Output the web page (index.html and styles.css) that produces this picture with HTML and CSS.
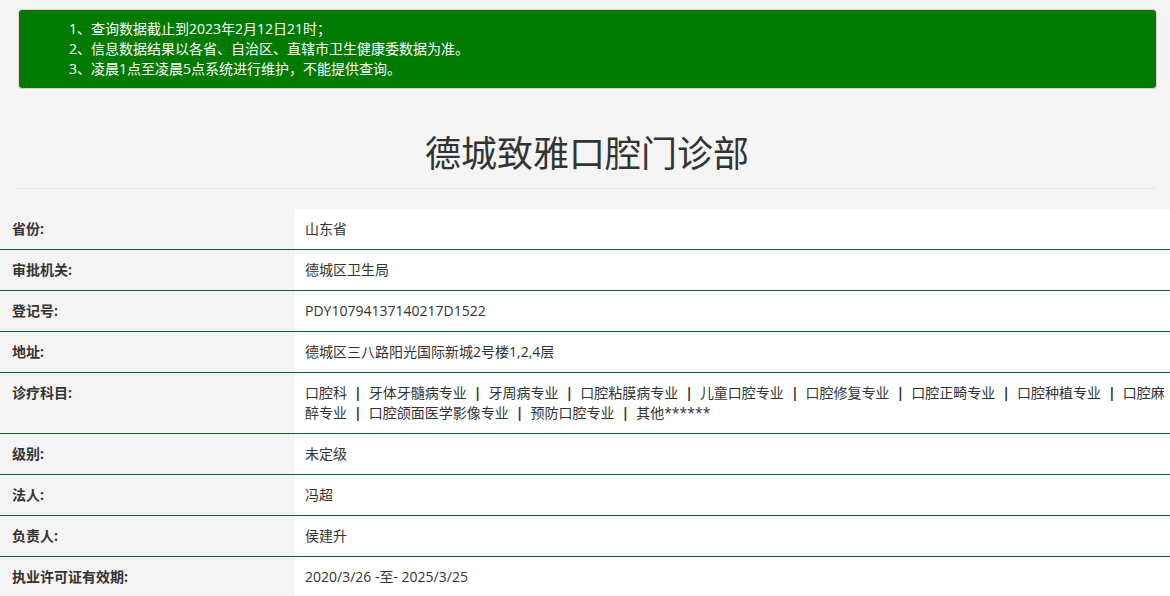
FILE: index.html
```html
<!DOCTYPE html>
<html lang="zh-CN">
<head>
<meta charset="utf-8">
<title>德城致雅口腔门诊部</title>
<link rel="stylesheet" href="styles.css">
</head>
<body>
<div class="notice">
  <ul class="notice-list">
    <li>1、查询数据截止到2023年2月12日21时；</li>
    <li>2、信息数据结果以各省、自治区、直辖市卫生健康委数据为准。</li>
    <li>3、凌晨1点至凌晨5点系统进行维护，不能提供查询。</li>
  </ul>
</div>
<div class="header">
  <h1 class="title">德城致雅口腔门诊部</h1>
</div>
<table class="info">
  <tr><th>省份:</th><td>山东省</td></tr>
  <tr><th>审批机关:</th><td>德城区卫生局</td></tr>
  <tr><th>登记号:</th><td>PDY10794137140217D1522</td></tr>
  <tr><th>地址:</th><td>德城区三八路阳光国际新城2号楼1,2,4层</td></tr>
  <tr><th>诊疗科目:</th><td>口腔科<span class="sep">|</span>牙体牙髓病专业<span class="sep">|</span>牙周病专业<span class="sep">|</span>口腔粘膜病专业<span class="sep">|</span>儿童口腔专业<span class="sep">|</span>口腔修复专业<span class="sep">|</span>口腔正畸专业<span class="sep">|</span>口腔种植专业<span class="sep">|</span>口腔麻醉专业<span class="sep">|</span>口腔颌面医学影像专业<span class="sep">|</span>预防口腔专业<span class="sep">|</span>其他******</td></tr>
  <tr><th>级别:</th><td>未定级</td></tr>
  <tr><th>法人:</th><td>冯超</td></tr>
  <tr><th>负责人:</th><td>侯建升</td></tr>
  <tr><th>执业许可证有效期:</th><td>2020/3/26 -至- 2025/3/25</td></tr>
</table>
</body>
</html>
```

FILE: styles.css
```css
html, body {
  margin: 0;
  padding: 0;
  background: #f4f4f4;
  color: #333;
  font-family: "Open Sans", "Noto Sans CJK SC", sans-serif;
  font-size: 14px;
  line-height: 20px;
}

.notice {
  margin: 9px 13px 0 18px;
  background: #007a00;
  border: 1px solid #ebccd1;
  border-radius: 4px;
  padding: 9px 0;
  color: #fff;
}

.notice-list {
  list-style: none;
  margin: 0;
  padding: 0 0 0 50px;
}

.header {
  margin: 0 13px 0 17px;
  padding: 40px 0 9px;
  border-bottom: 1px solid #e8e8e8;
  text-align: center;
}

.title {
  margin: 0;
  font-size: 36px;
  line-height: 50px;
  font-weight: normal;
  color: #333;
}

.info {
  margin-top: 20px;
  width: 100%;
  border-collapse: collapse;
}

.info th,
.info td {
  padding: 10px 4px 10px 12px;
  vertical-align: top;
  text-align: left;
  border-bottom: 1px solid #0b5f2e;
}

.info tr:last-child th,
.info tr:last-child td {
  border-bottom: none;
}

.info th {
  width: 279px;
  font-weight: bold;
  background: #f4f4f4;
}

.info td {
  background: #fff;
  padding-left: 10px;
}

.sep {
  font-weight: bold;
  margin: 0 7px;
}
```
